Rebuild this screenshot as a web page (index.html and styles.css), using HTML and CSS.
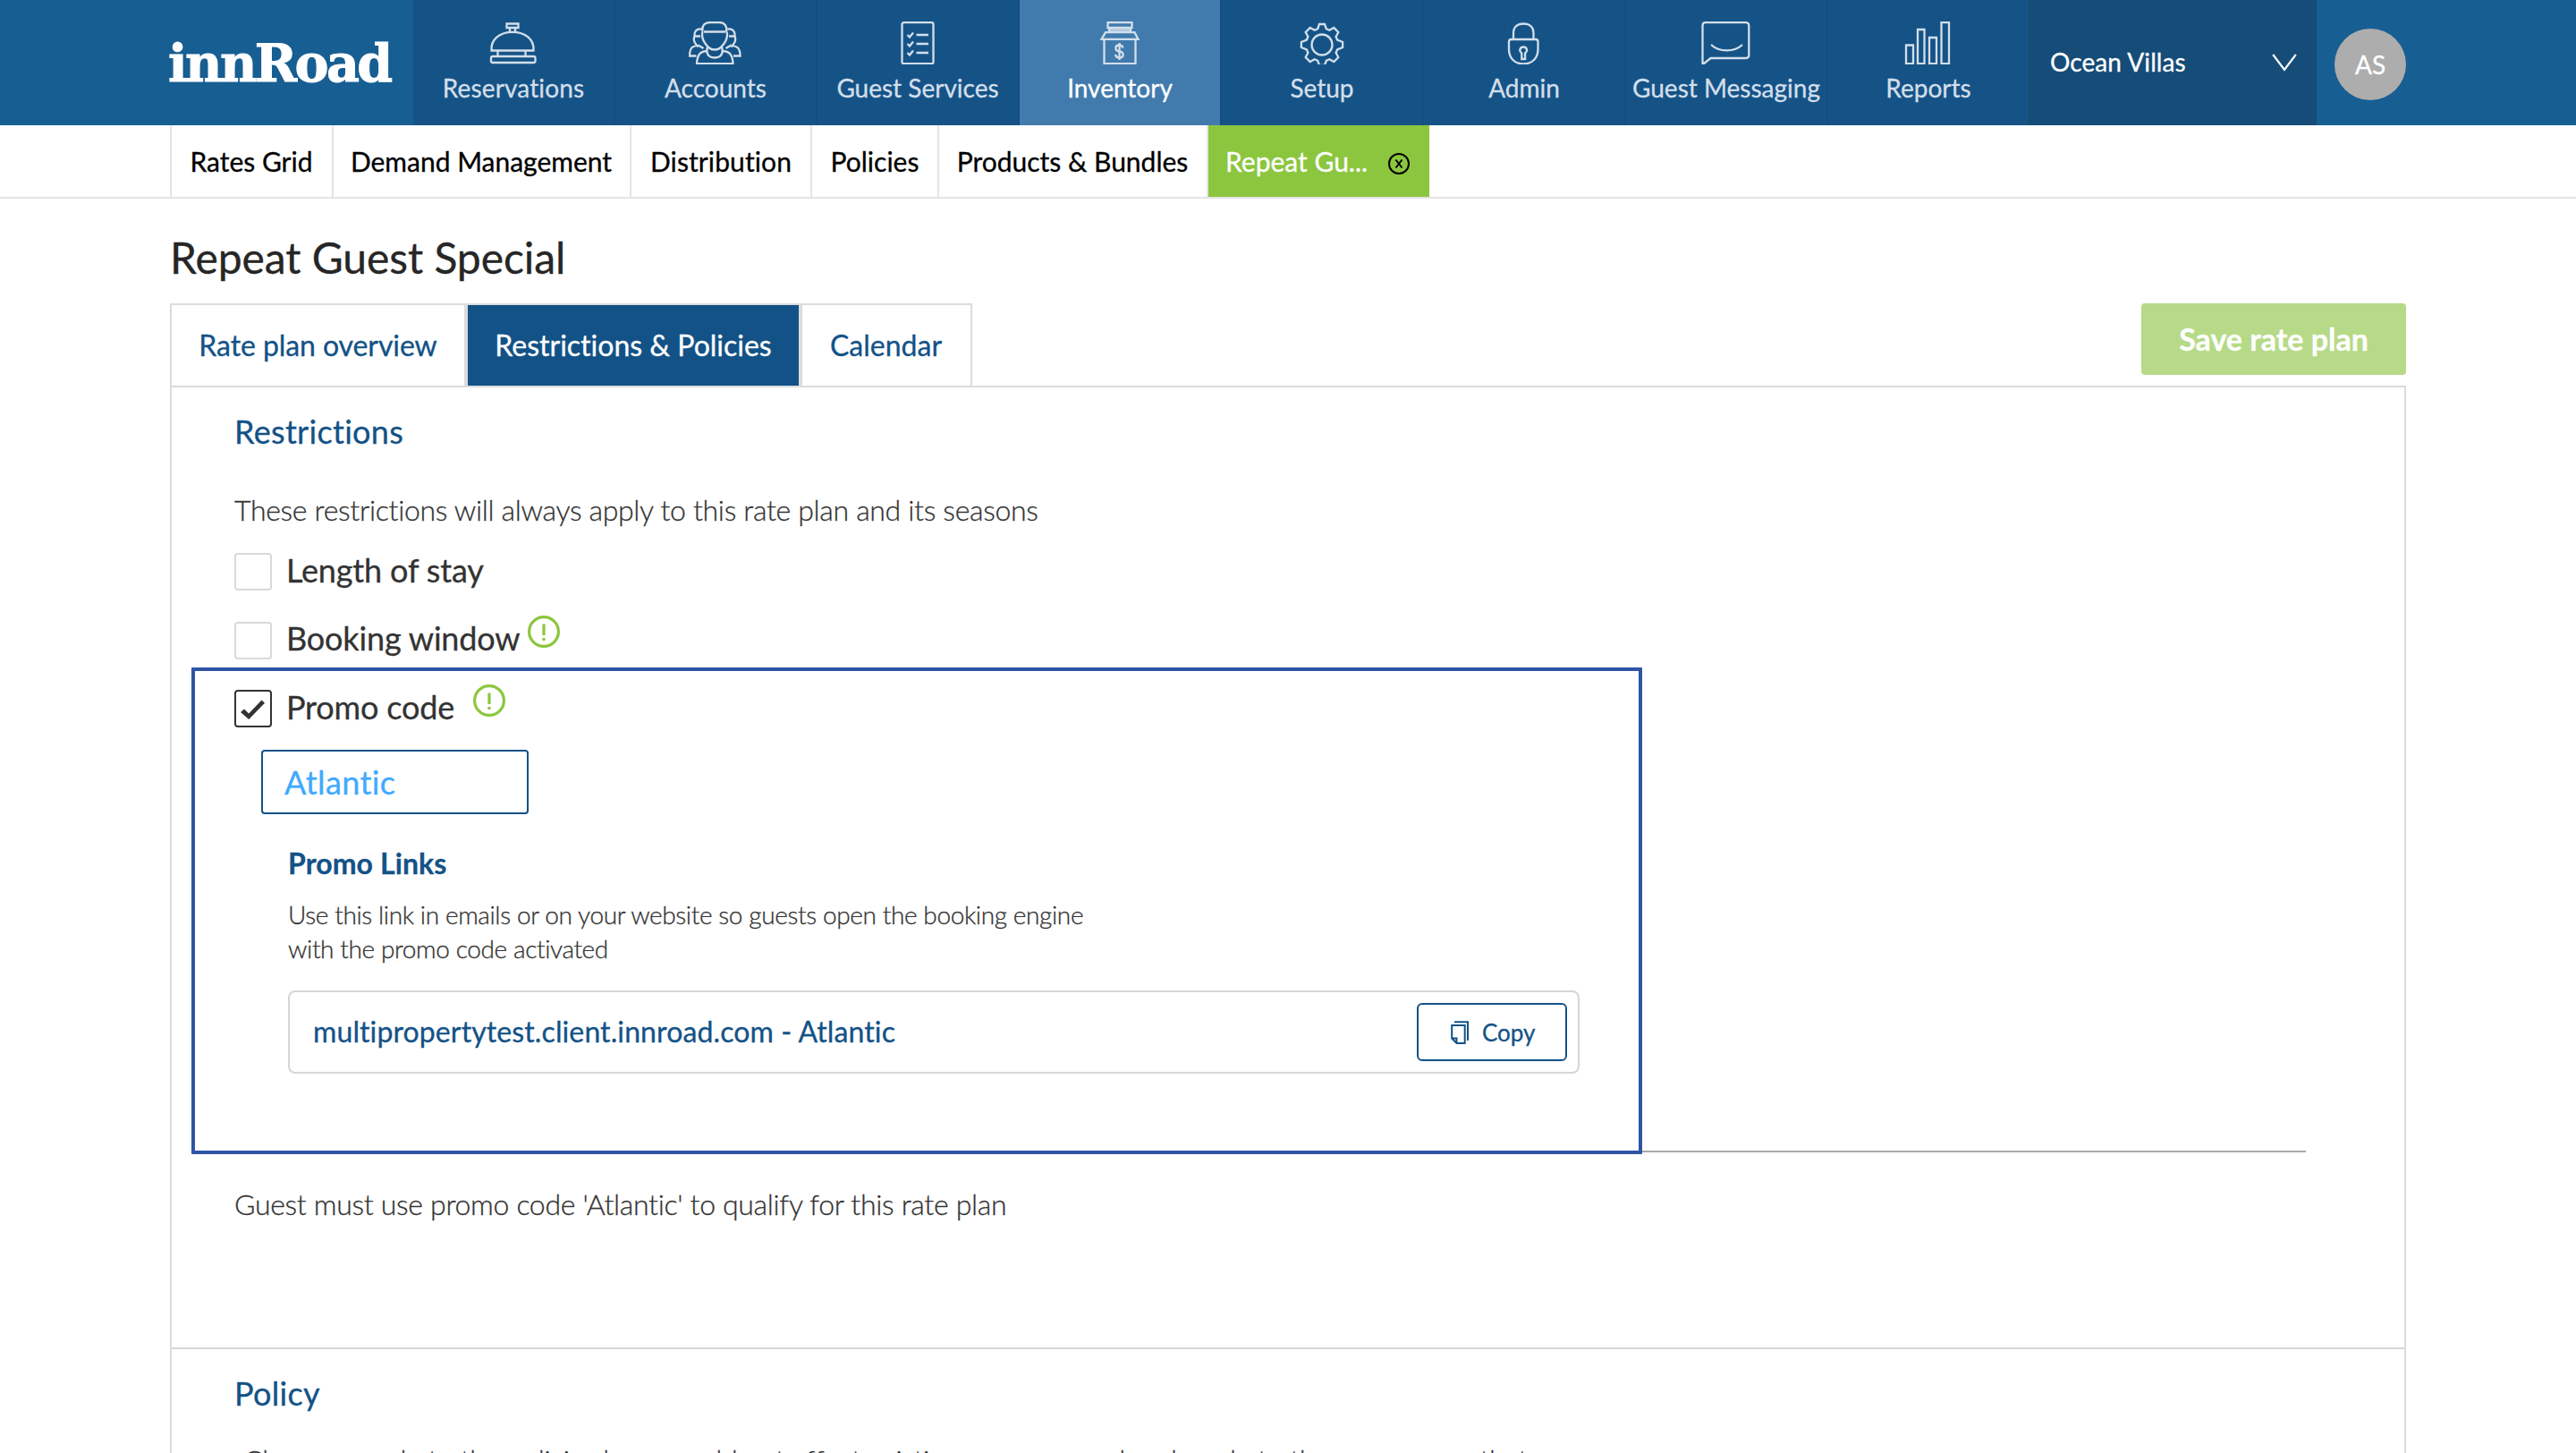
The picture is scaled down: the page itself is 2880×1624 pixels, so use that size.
FILE: index.html
```html
<!DOCTYPE html>
<html lang="en">
<head>
<meta charset="utf-8">
<title>innRoad - Repeat Guest Special</title>
<link rel="stylesheet" href="styles.css">
</head>
<body>
<header class="topbar">
  <div class="logo">innRoad</div>
  <nav class="mainnav">
    <a class="nav-item"><svg class="nav-icon" viewBox="0 0 60 48"><path d="M22.500 2.500h13v4.500h-13zM26 7v4.500M32 7v4.500M5.500 32.500C4.500 20 15 11.800 29 11.800S53.500 20 52.500 32.500zM12.500 33v6M43.500 33v6"/><rect x="5" y="39" width="49.500" height="7" rx="2"/></svg><span class="stretch">Reservations</span></a>
    <a class="nav-item"><svg class="nav-icon" viewBox="0 0 60 48"><path d="M15.500 11.500C14.500 4 18 1 24 1h10c6 0 9 4 8 10.500M17 11.500h24M15.500 11.500c-1.500 5 .5 10 4 14.500 2 3 5 5.500 9.500 5.500s7.500-2.500 9.500-5.500c3.500-4.500 5.500-9.500 4-14.500M14.500 8.500c-6-1-8.500 3-8 8-2 5 .5 8 4 12M43.500 8.500c6-1 8.500 3 8 8 2 5-.5 8-4 12M7 16.500h6M45 16.500h6M10.500 26.500C4 28 1 29 1 38.500h7.500M47.500 26.500C54 28 57.500 29 57.500 38.500H50M20 33c-7 .5-10.500 4-11 14.200h40.500C49 37 45.500 33.500 38.500 33M20.500 29v5.500c1 8 16 8 17 0V29M10.500 26.500l6 3.500M47.500 26.500l-6 3.500"/></svg><span>Accounts</span></a>
    <a class="nav-item"><svg class="nav-icon" viewBox="0 0 60 48"><rect x="12.500" y="1.200" width="35" height="46" rx="2"/><path d="M18.500 15l2.500 2.500 4-5M28.500 15H42M18.500 25l2.500 2.500 4-5M28.500 25H42M18.500 35l2.500 2.500 4-5M28.500 35H42"/></svg><span>Guest Services</span></a>
    <a class="nav-item active"><svg class="nav-icon" viewBox="0 0 60 48"><path class="tint" d="M17 6.500h25V12H17z"/><path d="M16.500 1.200h27V7h-27zM18 7v5M42 7v5M14 12.200h32.500l4 7.600H9.500zM12.500 20v27.200h35V20M33.500 29.500c-.5-2-2-3-4-3-5.500 0-5.500 6.500 0 7s5.500 7 0 7c-2.500 0-4-1-4.500-3.500M29.500 24v19"/></svg><span>Inventory</span></a>
    <a class="nav-item"><svg class="nav-icon" viewBox="0 0 60 48"><circle cx="30" cy="26" r="11.500"/><path d="M27 3h6l1.800 5.200 3.500 1.500 5-2.700 5 5-2.700 5 1.500 3.500 6 2.500v6l-6 2.500-1.500 3.500 2.700 5-5 5-5-2.700-3.500 1.500L33 49h-6l-1.800-5.200-3.500-1.500-5 2.700-5-5 2.700-5-1.500-3.500-6-2.500v-6l6-2.500 1.500-3.500-2.700-5 5-5 5 2.700 3.500-1.500z"/></svg><span>Setup</span></a>
    <a class="nav-item"><svg class="nav-icon" viewBox="0 0 60 48"><path d="M18 19.500V13C18 6 22.500 2.500 29.200 2.500S40.500 6 40.500 13v6.500M15.500 20h27.500c2 0 2.500 1 2.500 3v8c0 9.500-6 16.500-16.300 16.500S13 40.500 13 31v-8c0-2 .5-3 2.500-3zM27.300 35.500c-3.500-2.500-2-7 1.900-7s5.300 4.500 1.900 7v6.500h-3.800z"/></svg><span>Admin</span></a>
    <a class="nav-item"><svg class="nav-icon" viewBox="0 0 60 48"><path d="M3.500 47V4.500C3.500 2 4.500 1.200 7 1.200h44.500c2.500 0 3.800 1 3.800 3.500v33c0 2.500-1.500 3.300-4 3.300H12.500L4.500 47.500zM13 26c9 8.500 26 8.500 35 0"/></svg><span>Guest Messaging</span></a>
    <a class="nav-item"><svg class="nav-icon" viewBox="0 0 60 48"><path d="M5 26.500h8v20.700H5zM18 9h7.500v38.200H18zM31 18h8v29.200h-8zM44.500 1.200H53v46h-8.500z"/></svg><span>Reports</span></a>
  </nav>
  <div class="property"><span>Ocean Villas</span><svg class="chevron" viewBox="0 0 28 20"><path d="M1.200 1l12.800 17L26.800 1"/></svg></div>
  <div class="avatar">AS</div>
</header>

<nav class="subnav">
  <a class="rates">Rates Grid</a><a class="demand">Demand Management</a><a class="distribution">Distribution</a><a class="policies">Policies</a><a class="products">Products &amp; Bundles</a>
  <a class="current">Repeat Gu...<svg class="close" viewBox="0 0 24 24"><circle cx="12" cy="12" r="11"/><path d="M8.500 7.500l7 9M15.500 7.500l-7 9"/></svg></a>
</nav>

<main class="page">
  <h1 class="title">Repeat Guest Special</h1>
  <div class="tabrow">
    <div class="tabs"><a class="tab overview">Rate plan overview</a><a class="tab selected">Restrictions &amp; Policies</a><a class="tab calendar">Calendar</a></div>
    <button class="save">Save rate plan</button>
  </div>
  <div class="panel">
    <section class="restrictions">
      <h2 class="heading">Restrictions</h2>
      <p class="note">These restrictions will always apply to this rate plan and its seasons</p>
      <div class="options">
        <div class="option"><span class="check"></span><span class="option-label first">Length of stay</span></div>
        <div class="option"><span class="check"></span><span class="option-label">Booking window</span><svg class="info" viewBox="0 0 36 36"><circle cx="18" cy="18" r="16.400"/><path d="M18 9.500v12.500M18 25v3"/></svg></div>
        <div class="option"><span class="check checked"><svg viewBox="0 0 42 42"><path d="M7 25l4-3.500 5.200 5L30.500 11.500l3.500 3.200L16.200 33z"/></svg></span><span class="option-label">Promo code</span><svg class="info wide" viewBox="0 0 36 36"><circle cx="18" cy="18" r="16.400"/><path d="M18 9.500v12.500M18 25v3"/></svg></div>
      </div>
      <div class="code-input">Atlantic</div>
      <div class="links">
        <h3 class="links-title">Promo Links</h3>
        <p class="links-text">Use this link in emails or on your website so guests open the booking engine<br>with the promo code activated</p>
        <div class="link-box"><span class="link">multipropertytest.client.innroad.com - Atlantic</span>
          <button class="copy"><svg class="copy-icon" viewBox="0 0 20 26"><path d="M4 1.200h15V22M1.200 5h14.500v20H6.500L1.200 19.500zM1.200 19.500h5.300V25"/></svg>Copy</button></div>
      </div>
      <hr class="rule">
      <p class="summary">Guest must use promo code 'Atlantic' to qualify for this rate plan</p>
      <div class="highlight"></div>
    </section>
    <section class="policy">
      <h2 class="heading">Policy</h2>
      <p class="policy-note">Changes made to the policies here would not affect existing season saved and made to the season one that</p>
    </section>
  </div>
</main>
</body>
</html>
```
FILE: styles.css
```css
* { box-sizing: border-box; margin: 0; padding: 0; }
body {
  width: 2880px;
  height: 1624px;
  overflow: hidden;
  background: #fff;
  font-family: Lato, "Open Sans", sans-serif;
  font-variant-ligatures: none;
  -webkit-text-stroke: 0.300px;
  color: #333;
}
button { font-family: inherit; font-variant-ligatures: none; }
svg { display: block; fill: none; }

.topbar { display: flex; height: 140px; background: #175e93; color: #fff; }
.logo {
  width: 462px;
  padding-left: 188px;
  padding-top: 1px;
  font: bold 57px/140px "DejaVu Serif", serif;
  letter-spacing: -2.600px;
  -webkit-text-stroke: 1px;
}
.mainnav { display: flex; background: #155387; }
.nav-item {
  width: 226px;
  height: 140px;
  border-right: 2px solid #164d7c;
  display: flex;
  flex-direction: column;
  align-items: center;
  padding-top: 24px;
  gap: 6px;
  font-size: 28px;
  line-height: 40px;
  white-space: nowrap;
  color: #d3dfea;
}
.nav-item:last-child { width: 224px; border-right: 0; }
.nav-item.active { background: #417bae; color: #fff; }
.nav-item .stretch { letter-spacing: 0.150px; }
.nav-icon { width: 60px; height: 48px; stroke: #d3dfea; stroke-width: 2.300; flex: none; }
.nav-icon .tint { fill: #b3cbe0; stroke: none; }
.property {
  width: 322px;
  background: #154c78;
  display: flex;
  align-items: center;
  justify-content: space-between;
  padding: 0 22px 0 24px;
  font-size: 28px;
}
.property span { line-height: 40px; margin-bottom: 2px; letter-spacing: 0.080px; }
.chevron { width: 28px; height: 20px; stroke: #fff; stroke-width: 2.200; }
.avatar {
  width: 80px;
  height: 80px;
  margin: 32px 0 0 20px;
  border-radius: 50%;
  background: #adadad;
  font-size: 28px;
  line-height: 80px;
  text-align: center;
}

.subnav {
  display: flex;
  height: 82px;
  padding-left: 190px;
  border-bottom: 2px solid #e4e4e4;
  font-size: 30px;
  line-height: 80px;
  color: #000;
  white-space: nowrap;
  text-align: center;
}
.subnav a { border-left: 2px solid #e4e4e4; }
.subnav .rates { width: 181px; padding-right: 1px; }
.subnav .demand { width: 333px; padding-right: 1px; }
.subnav .distribution { width: 202px; letter-spacing: 0.100px; }
.subnav .policies { width: 142px; }
.subnav .products { width: 301px; padding-right: 1px; }
.subnav .current {
  display: flex;
  align-items: center;
  justify-content: space-between;
  width: 249px;
  padding: 0 22px 0 19px;
  background: #8cc63f;
  background-clip: padding-box;
  color: #fff;
}
.close { width: 24px; height: 24px; margin-top: 6px; stroke: #000; stroke-width: 2; }

.page { width: 2500px; margin-left: 190px; padding-top: 36px; }
.title { font-size: 48px; line-height: 60px; font-weight: 400; letter-spacing: -0.060px; color: #262626; }
.tabrow { display: flex; justify-content: space-between; height: 92px; margin-top: 21px; }
.tabs { display: flex; font-size: 32px; line-height: 90px; text-align: center; color: #135287; }
.tab { border: 2px solid #dcdcdc; border-bottom: 0; height: 92px; white-space: nowrap; }
.tab.overview { width: 331px; letter-spacing: -0.080px; }
.tab.selected { width: 374px; background: #135287; background-clip: padding-box; color: #fff; }
.tab.calendar { width: 192px; padding-right: 1px; }
.save {
  width: 296px;
  height: 80px;
  padding-bottom: 2px;
  border: 0;
  border-radius: 4px;
  background: #b6da87;
  color: #fff;
  font-size: 34px;
  font-weight: 700;
}

.panel { border: 2px solid #dcdcdc; border-bottom: 0; height: 1193px; overflow: hidden; }
.restrictions {
  position: relative;
  height: 1075px;
  padding: 25px 0 0 70px;
  border-bottom: 2px solid #d6d6d6;
}
.heading { font-size: 36px; line-height: 48px; font-weight: 400; letter-spacing: 0.300px; color: #135287; }
.note, .summary, .policy-note {
  font-size: 32px;
  line-height: 48px;
  font-weight: 300;
  letter-spacing: -0.320px;
}
.note { margin-top: 40px; }
.options { margin-top: 6px; }
.option { display: flex; align-items: center; height: 77px; }
.option:last-child { height: 76px; }
.check { width: 42px; height: 42px; border: 2px solid #d9d9d9; border-radius: 4px; }
.check.checked { border-color: #333; }
.check svg { width: 42px; height: 42px; margin: -2px; fill: #333; }
.option-label { margin-left: 16px; margin-bottom: 5px; font-size: 36px; line-height: 48px; letter-spacing: -0.160px; }
.option-label.first { margin-bottom: 3px; }
.info { width: 36px; height: 36px; margin-left: 9px; margin-bottom: 19px; stroke: #8cc63f; stroke-width: 3.200; }
.info.wide { margin-left: 21px; }
.code-input {
  width: 299px;
  height: 72px;
  margin: 8px 0 0 30px;
  padding-left: 24px;
  border: 2px solid #135287;
  border-radius: 4px;
  font-size: 36px;
  line-height: 68px;
  letter-spacing: 0.400px;
  color: #40a9ff;
}
.links { width: 1444px; margin: 35px 0 0 60px; }
.links-title { font-size: 32px; line-height: 40px; font-weight: 700; letter-spacing: 0.100px; color: #135287; }
.links-text {
  margin-top: 18px;
  font-size: 28px;
  line-height: 38px;
  font-weight: 300;
  letter-spacing: -0.380px;
  white-space: nowrap;
}
.link-box {
  display: flex;
  align-items: center;
  justify-content: space-between;
  height: 93px;
  margin-top: 28px;
  padding: 0 12px 0 26px;
  border: 2px solid #d6d6d6;
  border-radius: 8px;
}
.link { font-size: 32px; line-height: 40px; margin-bottom: 1px; letter-spacing: 0.110px; color: #135287; }
.copy {
  display: flex;
  align-items: center;
  gap: 15px;
  width: 168px;
  height: 65px;
  padding-left: 36px;
  border: 2px solid #135287;
  border-radius: 6px;
  background: #fff;
  color: #135287;
  font-size: 26px;
}
.copy-icon { width: 20px; height: 26px; stroke: #135287; stroke-width: 2; }
.rule { width: 2316px; height: 2px; margin-top: 86px; border: 0; background: #a9a9a9; }
.summary { margin-top: 34px; }
.highlight {
  position: absolute;
  left: 22px;
  top: 313px;
  width: 1622px;
  height: 544px;
  border: 4px solid #2e55a5;
  border-radius: 1px;
}
.policy { padding: 25px 0 0 70px; }
.policy-note { margin: 27px 0 0 10px; letter-spacing: -0.400px; white-space: nowrap; }
```
